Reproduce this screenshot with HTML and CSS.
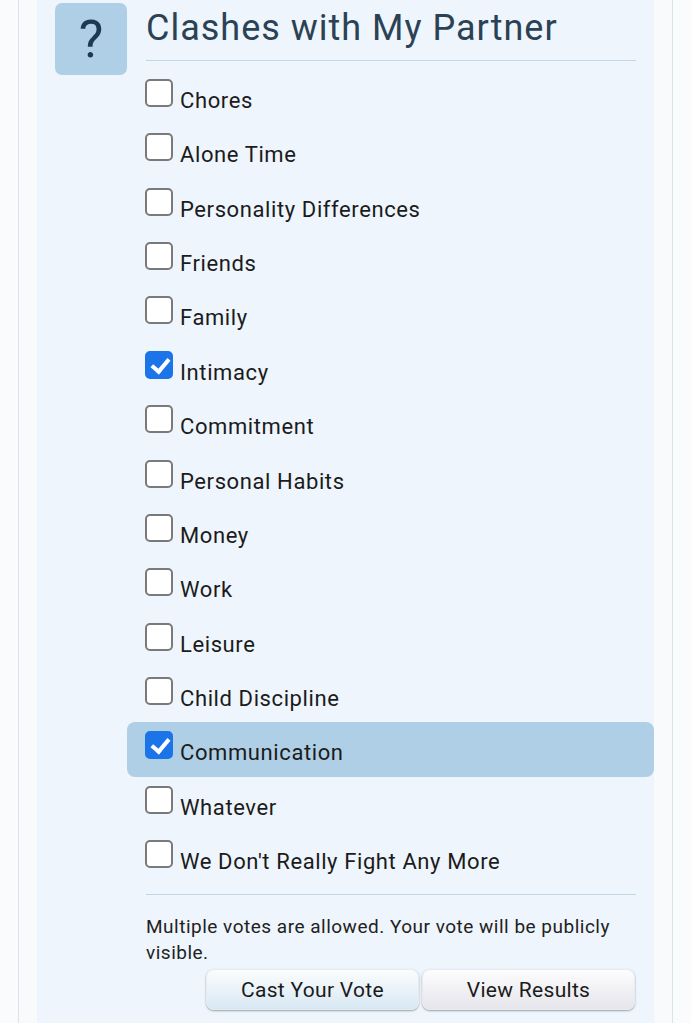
FILE: index.html
```html
<!DOCTYPE html>
<html lang="en">
<head>
    <meta charset="UTF-8">
    <meta name="viewport" content="width=device-width, initial-scale=1.0">
    <title>Poll - Clashes with My Partner</title>
    <link rel="stylesheet" href="styles.css">
</head>
<body>
    <div class="page">
        <div class="poll">
            <div class="poll-icon">?</div>
            <div class="poll-body">
                <h1 class="poll-title">Clashes with My Partner</h1>
                <form id="pollForm" class="options">
                    <label class="option"><input type="checkbox" name="vote" value="1"><span>Chores</span></label>
                    <label class="option"><input type="checkbox" name="vote" value="2"><span>Alone Time</span></label>
                    <label class="option"><input type="checkbox" name="vote" value="3"><span>Personality Differences</span></label>
                    <label class="option"><input type="checkbox" name="vote" value="4"><span>Friends</span></label>
                    <label class="option"><input type="checkbox" name="vote" value="5"><span>Family</span></label>
                    <label class="option"><input type="checkbox" name="vote" value="6" checked><span>Intimacy</span></label>
                    <label class="option"><input type="checkbox" name="vote" value="7"><span>Commitment</span></label>
                    <label class="option"><input type="checkbox" name="vote" value="8"><span>Personal Habits</span></label>
                    <label class="option"><input type="checkbox" name="vote" value="9"><span>Money</span></label>
                    <label class="option"><input type="checkbox" name="vote" value="10"><span>Work</span></label>
                    <label class="option"><input type="checkbox" name="vote" value="11"><span>Leisure</span></label>
                    <label class="option"><input type="checkbox" name="vote" value="12"><span>Child Discipline</span></label>
                    <label class="option active"><input type="checkbox" name="vote" value="13" checked><span>Communication</span></label>
                    <label class="option"><input type="checkbox" name="vote" value="14"><span>Whatever</span></label>
                    <label class="option"><input type="checkbox" name="vote" value="15"><span>We Don't Really Fight Any More</span></label>
                </form>
                <div class="poll-footer">
                    <p class="note">Multiple votes are allowed. Your vote will be publicly visible.</p>
                    <div class="buttons">
                        <button type="button" class="btn btn-vote">Cast Your Vote</button>
                        <button type="button" class="btn btn-results">View Results</button>
                    </div>
                </div>
            </div>
        </div>
    </div>
</body>
</html>
```

FILE: styles.css
```css
body {
    font-family: Roboto, "Noto Sans", Arial, sans-serif;
    background-color: #fafbfc;
    margin: 0;
    padding: 0;
    height: 1023px;
    overflow: hidden;
}
.page {
    margin-left: 18px;
    width: 617px;
    padding: 0 18px;
    min-height: 1023px;
    background: #f8fafc;
    border-left: 1px solid #d9e3ec;
    border-right: 1px solid #d9e3ec;
}
.poll {
    display: grid;
    grid-template-columns: 72px 1fr;
    padding: 3px 0 0 18px;
    background: #eef5fc;
    min-height: 1020px;
}
.poll-icon {
    width: 72px;
    height: 72px;
    border-radius: 7px;
    background-color: #afcfe6;
    color: #1d3a50;
    font-size: 52px;
    line-height: 74px;
    text-align: center;
}
.poll-body {
    display: flex;
    flex-direction: column;
}
.poll-title {
    margin: 0 18px 0 19px;
    padding: 4px 0 10px;
    font-size: 36px;
    font-weight: 400;
    line-height: 43px;
    letter-spacing: 1px;
    color: #2b4254;
    border-bottom: 1.5px solid #c3d6e6;
}
.options {
    display: flex;
    flex-direction: column;
    padding-top: 9px;
}
.option {
    display: flex;
    align-items: flex-start;
    gap: 7px;
    height: 54.36px;
    box-sizing: border-box;
    padding: 9px 0 0 18px;
    font-size: 22px;
    line-height: 30px;
    letter-spacing: 0.6px;
    color: #1b1b1b;
    border-radius: 8px;
}
.option span {
    padding-top: 7px;
}
.option.active {
    background-color: #afcfe6;
}
.option input {
    appearance: none;
    -webkit-appearance: none;
    position: relative;
    width: 28px;
    height: 28px;
    margin: 0;
    flex-shrink: 0;
    box-sizing: border-box;
    background: #fff;
    border: 2px solid #7a7a7a;
    border-radius: 5px;
}
.option input:checked {
    background: #1b74e8;
    border-color: #1b74e8;
}
.option input:checked::after {
    content: "";
    position: absolute;
    left: 8px;
    top: 2px;
    width: 7px;
    height: 14px;
    border: solid #fff;
    border-width: 0 4px 4px 0;
    transform: rotate(40deg);
}
.poll-footer {
    margin: 9px 18px 0 19px;
    border-top: 1.5px solid #c3d6e6;
}
.note {
    margin: 19px 0 0;
    font-size: 19px;
    line-height: 26px;
    letter-spacing: 0.5px;
    color: #222;
}
.buttons {
    display: flex;
    justify-content: flex-end;
    gap: 3px;
    margin-top: 3px;
    margin-right: 1px;
}
.btn {
    width: 213px;
    height: 41px;
    font-family: inherit;
    font-size: 21px;
    letter-spacing: 0.3px;
    color: #1b1b1b;
    border: 1px solid #e6ebf0;
    border-radius: 8px;
    box-shadow: 0 1px 2px rgba(0, 0, 0, 0.35);
    cursor: pointer;
}
.btn-vote {
    background: linear-gradient(#fbfdfe, #d8e8f3);
}
.btn-results {
    background: linear-gradient(#fdfdfe, #e5e5eb);
}
```
